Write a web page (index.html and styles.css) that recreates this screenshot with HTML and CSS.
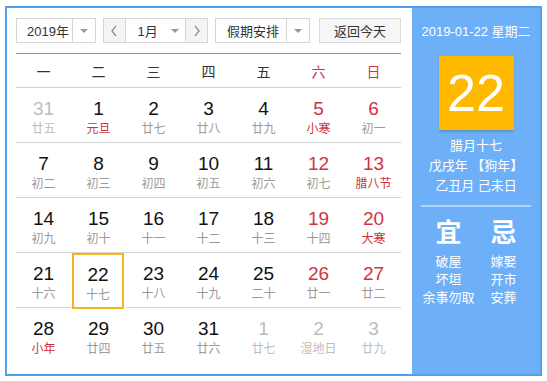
FILE: index.html
```html
<!DOCTYPE html>
<html lang="zh">
<head>
<meta charset="utf-8">
<link rel="stylesheet" href="styles.css">
</head>
<body>
<div class="cal">
  <div class="main">
    <div class="toolbar">
      <div class="sel sel-year"><span class="sel-text">2019年</span><span class="sel-arrow"><i class="tri"></i></span></div>
      <div class="sel sel-month">
        <span class="nav"><svg width="8" height="12" viewBox="0 0 8 12"><polyline points="6,1 2,6 6,11" fill="none" stroke="#777" stroke-width="1.2"/></svg></span>
        <span class="sel-text m-text">1月</span><span class="m-arrow"><i class="tri"></i></span>
        <span class="nav nav-r"><svg width="8" height="12" viewBox="0 0 8 12"><polyline points="2,1 6,6 2,11" fill="none" stroke="#777" stroke-width="1.2"/></svg></span>
      </div>
      <div class="sel sel-hol"><span class="sel-text">假期安排</span><span class="sel-arrow"><i class="tri"></i></span></div>
      <div class="btn">返回今天</div>
    </div>
    <div class="week">
      <span>一</span><span>二</span><span>三</span><span>四</span><span>五</span><span class="red">六</span><span class="red">日</span>
    </div>
    <div class="grid">
      <div class="cell other"><b>31</b><i>廿五</i></div>
      <div class="cell"><b>1</b><i class="fest">元旦</i></div>
      <div class="cell"><b>2</b><i>廿七</i></div>
      <div class="cell"><b>3</b><i>廿八</i></div>
      <div class="cell"><b>4</b><i>廿九</i></div>
      <div class="cell we"><b>5</b><i class="fest">小寒</i></div>
      <div class="cell we"><b>6</b><i>初一</i></div>

      <div class="cell"><b>7</b><i>初二</i></div>
      <div class="cell"><b>8</b><i>初三</i></div>
      <div class="cell"><b>9</b><i>初四</i></div>
      <div class="cell"><b>10</b><i>初五</i></div>
      <div class="cell"><b>11</b><i>初六</i></div>
      <div class="cell we"><b>12</b><i>初七</i></div>
      <div class="cell we"><b>13</b><i class="fest">腊八节</i></div>

      <div class="cell"><b>14</b><i>初九</i></div>
      <div class="cell"><b>15</b><i>初十</i></div>
      <div class="cell"><b>16</b><i>十一</i></div>
      <div class="cell"><b>17</b><i>十二</i></div>
      <div class="cell"><b>18</b><i>十三</i></div>
      <div class="cell we"><b>19</b><i>十四</i></div>
      <div class="cell we"><b>20</b><i class="fest">大寒</i></div>

      <div class="cell"><b>21</b><i>十六</i></div>
      <div class="cell today"><b>22</b><i>十七</i></div>
      <div class="cell"><b>23</b><i>十八</i></div>
      <div class="cell"><b>24</b><i>十九</i></div>
      <div class="cell"><b>25</b><i>二十</i></div>
      <div class="cell we"><b>26</b><i>廿一</i></div>
      <div class="cell we"><b>27</b><i>廿二</i></div>

      <div class="cell last"><b>28</b><i class="fest">小年</i></div>
      <div class="cell last"><b>29</b><i>廿四</i></div>
      <div class="cell last"><b>30</b><i>廿五</i></div>
      <div class="cell last"><b>31</b><i>廿六</i></div>
      <div class="cell last other"><b>1</b><i>廿七</i></div>
      <div class="cell last other"><b>2</b><i>湿地日</i></div>
      <div class="cell last other"><b>3</b><i>廿九</i></div>
    </div>
  </div>
  <div class="side">
    <div class="side-date">2019-01-22 星期二</div>
    <div class="big">22</div>
    <div class="lunar">
      <div>腊月十七</div>
      <div>戊戌年 【狗年】</div>
      <div>乙丑月 己未日</div>
    </div>
    <div class="sep"></div>
    <div class="yiji">
      <div class="col">
        <div class="head">宜</div>
        <div>破屋</div>
        <div>坏垣</div>
        <div>余事勿取</div>
      </div>
      <div class="col">
        <div class="head">忌</div>
        <div>嫁娶</div>
        <div>开市</div>
        <div>安葬</div>
      </div>
    </div>
  </div>
</div>
</body>
</html>
```

FILE: styles.css
```css
* { box-sizing: border-box; }
html, body { margin: 0; padding: 0; background: #fff; }
body {
  font-family: "Liberation Sans", "Noto Sans CJK SC", sans-serif;
  color: #333;
}
.cal {
  margin: 6px 0 0 5px;
  width: 537px;
  height: 370px;
  border: 2px solid #4fa0ef;
  display: flex;
}
.main {
  width: 405px;
  padding: 10px 11px 0 9px;
}
.toolbar {
  display: flex;
  height: 25px;
  font-size: 13px;
}
.sel {
  display: flex;
  align-items: center;
  height: 25px;
  border: 1px solid #d6d6d6;
  background: #fff;
  color: #333;
}
.sel-year { width: 80px; }
.sel-year .sel-text { width: 55px; padding-left: 10px; }
.sel-arrow {
  height: 100%;
  flex: 1;
  border-left: 1px solid #d6d6d6;
  display: flex;
  align-items: center;
  justify-content: center;
}
.tri {
  display: block;
  width: 0; height: 0;
  border-left: 4px solid transparent;
  border-right: 4px solid transparent;
  border-top: 4px solid #999;
}
.sel-month { width: 105px; margin-left: 7px; }
.nav {
  width: 22px;
  height: 100%;
  background: #f4f4f4;
  border-right: 1px solid #d6d6d6;
  display: flex;
  align-items: center;
  justify-content: center;
}
.nav-r { border-right: none; border-left: 1px solid #d6d6d6; }
.m-text { padding-left: 12px; width: 40px; }
.m-arrow { width: 21px; display: flex; justify-content: center; }
.sel-hol { width: 95px; margin-left: 7px; }
.sel-hol .sel-text { width: 70px; padding-left: 11px; }
.btn {
  margin-left: 9px;
  width: 82px;
  height: 25px;
  border: 1px solid #dadada;
  background: #f6f6f6;
  display: flex;
  align-items: center;
  justify-content: center;
  color: #333;
}
.week {
  margin-top: 10px;
  border-top: 1px solid #5aa5ee;
  height: 35px;
  display: grid;
  grid-template-columns: repeat(7, 55px);
  align-items: center;
  font-size: 14px;
  color: #333;
  border-bottom: 1px solid #d2d2d2;
}
.week span { text-align: center; }
.red { color: #d3333f; }
.grid {
  display: grid;
  grid-template-columns: repeat(7, 55px);
  grid-auto-rows: 55px;
}
.cell {
  border-bottom: 1px solid #d2d2d2;
  display: flex;
  flex-direction: column;
  align-items: center;
  padding-top: 9px;
}
.cell.last { border-bottom: none; }
.cell b {
  font-weight: normal;
  font-size: 19px;
  line-height: 24px;
  color: #111;
  font-family: "Liberation Sans", sans-serif;
}
.cell i {
  font-style: normal;
  font-size: 12px;
  line-height: 16px;
  color: #9a9a9a;
}
.cell.we b { color: #d3333f; }
.cell i.fest { color: #c9333f; }
.cell.other b, .cell.other i { color: #bdbdbd; }
.cell.today {
  border: 2px solid #f3b41c;
  margin: 0 2px -1px 1px;
  padding-top: 8px;
}
.side {
  flex: 1;
  background: #6db0f7;
  color: #fff;
  display: flex;
  flex-direction: column;
  align-items: center;
}
.side-date {
  margin-top: 15px;
  font-size: 13px;
  line-height: 18px;
}
.big {
  margin-top: 15px;
  width: 75px;
  height: 74px;
  background: #ffb900;
  color: #fff;
  font-size: 52px;
  line-height: 74px;
  text-align: center;
  box-shadow: 0 2px 2px rgba(0,0,0,0.15);
}
.lunar {
  margin-top: 6px;
  font-size: 13px;
  line-height: 20px;
  text-align: center;
}
.sep {
  margin-top: 9px;
  width: 110px;
  border-top: 2px solid rgba(255,255,255,0.45);
}
.yiji {
  display: flex;
  margin-top: 9px;
  font-size: 13px;
  line-height: 18px;
}
.col { display: flex; flex-direction: column; align-items: center; width: 55px; }
.head {
  font-size: 26px;
  font-weight: bold;
  line-height: 34px;
  margin-bottom: 3px;
}
```
